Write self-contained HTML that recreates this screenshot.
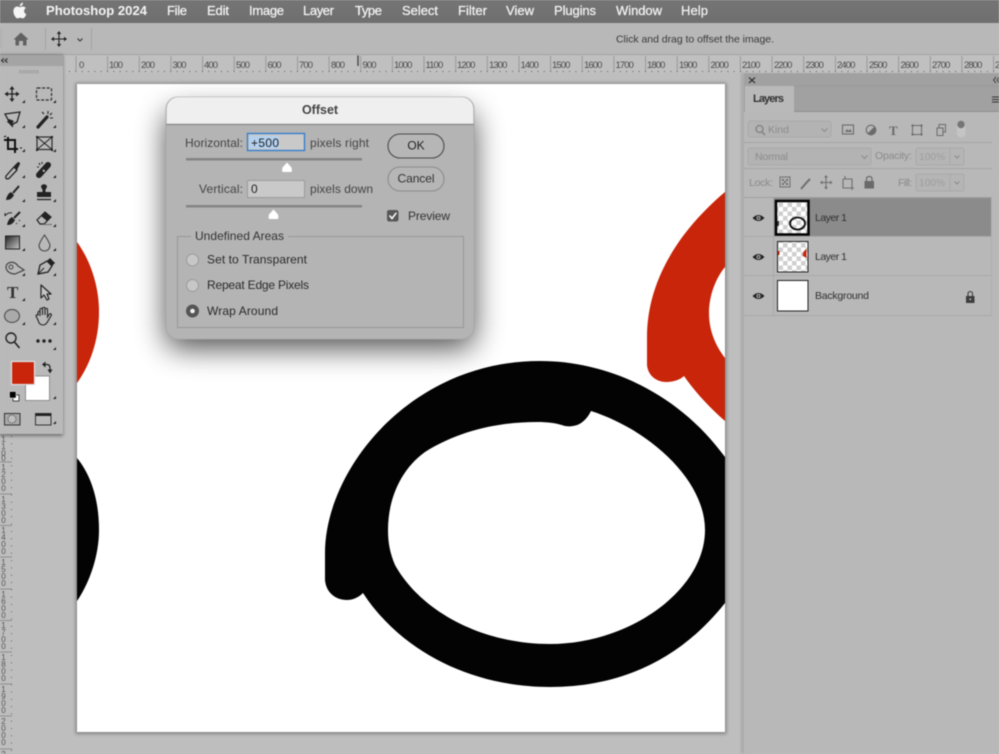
<!DOCTYPE html>
<html><head><meta charset="utf-8"><title>Photoshop Offset</title>
<style>
html,body{margin:0;padding:0;width:999px;height:754px;overflow:hidden;background:#bebebe}
svg{display:block;position:absolute;left:0;top:0;filter:blur(.4px)}
text{font-family:"Liberation Sans",sans-serif;fill:#2a2a2a}
.m{font-size:13px;fill:#f4f4f4;font-weight:700;stroke:none}
.r{font-size:9.5px;letter-spacing:-.9px;fill:#4a4a4a}
.v{font-size:8px;fill:#555;text-anchor:middle}
.d{font-size:12px;fill:#2b2b2b}
.l{font-size:10.5px;fill:#303030}
.g{font-size:10.5px;fill:#8a8a8a}
.g2{font-size:10px;fill:#949494}
.s{fill:none;stroke:#222;stroke-width:1.3}
.f{fill:#222;stroke:none}
</style></head><body>
<svg width="999" height="754" viewBox="0 0 999 754" xmlns="http://www.w3.org/2000/svg">
<defs>
<filter id="ds" x="-30%" y="-30%" width="160%" height="170%"><feGaussianBlur stdDeviation="15"/></filter>
<filter id="cs" x="-5%" y="-5%" width="110%" height="110%"><feGaussianBlur stdDeviation="1.5"/></filter>
<filter id="ts" x="-20%" y="-5%" width="140%" height="110%"><feGaussianBlur stdDeviation="1.5"/></filter>
<pattern id="ck" width="9" height="9" patternUnits="userSpaceOnUse"><rect width="9" height="9" fill="#fff"/><rect width="4.5" height="4.5" fill="#cfcfcf"/><rect x="4.5" y="4.5" width="4.5" height="4.5" fill="#cfcfcf"/></pattern>
<linearGradient id="gr" x1="0" x2="1" y1="0" y2="1"><stop offset="0" stop-color="#222"/><stop offset="1" stop-color="#c8c8c8"/></linearGradient>
<linearGradient id="mb" x1="0" x2="0" y1="0" y2="1"><stop offset="0" stop-color="#757575"/><stop offset="1" stop-color="#6f6f6f"/></linearGradient>
</defs>

<!-- base -->
<rect width="999" height="754" fill="#bebebe"/>
<rect width="999" height="23" fill="url(#mb)"/>
<rect y="23" width="999" height="32" fill="#b8b8b8"/>
<rect y="54" width="999" height="1" fill="#a3a3a3"/>

<!-- menu -->
<g transform="translate(10.5,1) scale(.8)"><path fill="#f5f5f5" d="M17.05 12.54c-.03-2.5 2.04-3.7 2.13-3.76-1.16-1.7-2.97-1.93-3.61-1.96-1.54-.16-3 .9-3.78.9-.78 0-1.98-.88-3.26-.86-1.68.03-3.22.98-4.09 2.48-1.74 3.02-.44 7.5 1.25 9.95.83 1.2 1.82 2.55 3.12 2.5 1.25-.05 1.72-.81 3.23-.81 1.51 0 1.94.81 3.26.78 1.35-.02 2.2-1.22 3.02-2.43.95-1.39 1.34-2.74 1.36-2.81-.03-.01-2.6-1-2.63-3.98zM14.56 5.2c.69-.84 1.16-2 1.03-3.16-1 .04-2.2.66-2.92 1.5-.64.74-1.2 1.93-1.05 3.06 1.11.09 2.25-.57 2.94-1.4z"/></g>
<text class="m" x="46" y="15" textLength="101" lengthAdjust="spacingAndGlyphs">Photoshop 2024</text>
<g>
<text class="m" x="167" y="15" textLength="20" style="font-weight:400;stroke:#f4f4f4;stroke-width:.25">File</text>
<text class="m" x="207" y="15" textLength="22" style="font-weight:400;stroke:#f4f4f4;stroke-width:.25">Edit</text>
<text class="m" x="249" y="15" textLength="35" style="font-weight:400;stroke:#f4f4f4;stroke-width:.25">Image</text>
<text class="m" x="303" y="15" textLength="31" style="font-weight:400;stroke:#f4f4f4;stroke-width:.25">Layer</text>
<text class="m" x="355" y="15" textLength="27" style="font-weight:400;stroke:#f4f4f4;stroke-width:.25">Type</text>
<text class="m" x="402" y="15" textLength="36" style="font-weight:400;stroke:#f4f4f4;stroke-width:.25">Select</text>
<text class="m" x="458" y="15" textLength="29" style="font-weight:400;stroke:#f4f4f4;stroke-width:.25">Filter</text>
<text class="m" x="506" y="15" textLength="28" style="font-weight:400;stroke:#f4f4f4;stroke-width:.25">View</text>
<text class="m" x="554" y="15" textLength="42" style="font-weight:400;stroke:#f4f4f4;stroke-width:.25">Plugins</text>
<text class="m" x="616" y="15" textLength="46" style="font-weight:400;stroke:#f4f4f4;stroke-width:.25">Window</text>
<text class="m" x="681" y="15" textLength="27" style="font-weight:400;stroke:#f4f4f4;stroke-width:.25">Help</text>
</g>

<!-- options bar -->
<path d="M0.5 29V49M1.5 29V49" stroke="#a0a0a0" stroke-width=".6" stroke-dasharray="1 1"/>
<path d="M21 32.5L28.5 39.5H26.5V45.5H23V41H19V45.5H15.5V39.5H13.5Z" fill="#616161"/>
<path d="M45.5 28V50M91.5 28V50" stroke="#a2a2a2" stroke-width="1"/>
<path d="M59 32V46M52 39H66" stroke="#222" stroke-width="1.1"/>
<path d="M59 31L56.8 34H61.2ZM59 47L56.8 44H61.2ZM51 39L54 36.8V41.2ZM67 39L64 36.8V41.2Z" fill="#222"/>
<path d="M77.5 38.5L80 41L82.5 38.5" fill="none" stroke="#333" stroke-width="1.1"/>
<text x="616" y="42.5" style="font-size:10.5px;fill:#3a3a3a" textLength="158">Click and drag to offset the image.</text>

<!-- horizontal ruler -->
<rect x="64" y="55" width="935" height="18" fill="#c0c0c0"/>
<path stroke="#9a9a9a" stroke-width="1" d="M76 56V71M107.6 56V71M139.3 56V71M170.9 56V71M202.6 56V71M234.2 56V71M265.8 56V71M297.5 56V71M329.1 56V71M360.8 56V71M392.4 56V71M424 56V71M455.7 56V71M487.3 56V71M519 56V71M550.6 56V71M582.2 56V71M613.9 56V71M645.5 56V71M677.2 56V71M708.8 56V71M740.4 56V71M772.1 56V71M803.7 56V71M835.4 56V71M867 56V71M898.6 56V71M930.3 56V71M961.9 56V71M993.6 56V71"/>
<path d="M69 71.5H999" stroke="#5e5e5e" stroke-width="1" stroke-dasharray="1 5.33"/>
<path d="M358 55.5V66" stroke="#444" stroke-width="1.4"/>
<g>
<text class="r" x="79" y="68">0</text><text class="r" x="109" y="68">100</text><text class="r" x="141" y="68">200</text><text class="r" x="172.5" y="68">300</text><text class="r" x="204" y="68">400</text><text class="r" x="236" y="68">500</text><text class="r" x="267.5" y="68">600</text><text class="r" x="299" y="68">700</text><text class="r" x="331" y="68">800</text><text class="r" x="362.5" y="68">900</text><text class="r" x="394" y="68">1000</text><text class="r" x="425.5" y="68">1100</text><text class="r" x="457" y="68">1200</text><text class="r" x="489" y="68">1300</text><text class="r" x="520.5" y="68">1400</text><text class="r" x="552" y="68">1500</text><text class="r" x="584" y="68">1600</text><text class="r" x="615.5" y="68">1700</text><text class="r" x="647" y="68">1800</text><text class="r" x="679" y="68">1900</text><text class="r" x="710.5" y="68">2000</text><text class="r" x="742" y="68">2100</text><text class="r" x="774" y="68">2200</text><text class="r" x="805.5" y="68">2300</text><text class="r" x="837" y="68">2400</text><text class="r" x="869" y="68">2500</text><text class="r" x="900.5" y="68">2600</text><text class="r" x="932" y="68">2700</text><text class="r" x="964" y="68">2800</text><text class="r" x="995" y="68">2900</text>
</g>

<!-- vertical ruler -->
<path stroke="#8f8f8f" stroke-width="1" d="M0 462H12M0 494H12M0 525.5H12M0 557H12M0 589H12M0 620.5H12M0 652H12M0 684H12M0 716H12M0 749H12"/>
<path d="M11.5 436V754" stroke="#666" stroke-width="1" stroke-dasharray="1 6.3"/>
<g>
<text class="v" x="3.5" y="442">1</text><text class="v" x="3.5" y="449">1</text><text class="v" x="3.5" y="456">0</text><text class="v" x="3.5" y="461">0</text>
<text class="v" x="3.5" y="470">1</text><text class="v" x="3.5" y="477">2</text><text class="v" x="3.5" y="484">0</text><text class="v" x="3.5" y="491">0</text>
<text class="v" x="3.5" y="502">1</text><text class="v" x="3.5" y="509">3</text><text class="v" x="3.5" y="516">0</text><text class="v" x="3.5" y="523">0</text>
<text class="v" x="3.5" y="533">1</text><text class="v" x="3.5" y="540">4</text><text class="v" x="3.5" y="547">0</text><text class="v" x="3.5" y="554">0</text>
<text class="v" x="3.5" y="565">1</text><text class="v" x="3.5" y="572">5</text><text class="v" x="3.5" y="579">0</text><text class="v" x="3.5" y="586">0</text>
<text class="v" x="3.5" y="597">1</text><text class="v" x="3.5" y="604">6</text><text class="v" x="3.5" y="611">0</text><text class="v" x="3.5" y="618">0</text>
<text class="v" x="3.5" y="628">1</text><text class="v" x="3.5" y="635">7</text><text class="v" x="3.5" y="642">0</text><text class="v" x="3.5" y="649">0</text>
<text class="v" x="3.5" y="660">1</text><text class="v" x="3.5" y="667">8</text><text class="v" x="3.5" y="674">0</text><text class="v" x="3.5" y="681">0</text>
<text class="v" x="3.5" y="692">1</text><text class="v" x="3.5" y="699">9</text><text class="v" x="3.5" y="706">0</text><text class="v" x="3.5" y="713">0</text>
<text class="v" x="3.5" y="724">2</text><text class="v" x="3.5" y="731">0</text><text class="v" x="3.5" y="738">0</text><text class="v" x="3.5" y="745">0</text>
<text class="v" x="3.5" y="757">2</text>
</g>

<!-- canvas -->
<rect x="75.500" y="83" width="651" height="651" fill="#000" opacity=".3" filter="url(#cs)"/>
<rect x="77" y="84" width="648" height="648" fill="#fff"/>
<path fill="#c8250a" fill-rule="evenodd" d="M725 192C680 230 647 280 647 337L647 365C648 376 657 382 666 382C673 382 680 380 684 376C695 392 710 408 725 421L725 358C715 345 709 330 709 313C709 295 716 278 725 267Z"/>
<path fill="#c8250a" d="M77 242C90 260 99 285 99 312C99 340 90 365 77 383Z"/>
<path fill="#030303" d="M77 458C91 475 99 500 99 530C99 555 90 582 77 601Z"/>
<path fill="#030303" fill-rule="evenodd" d="M325 553C325 470 410 361 540 361C610 361 680 395 725 457L725 603C680 660 620 687 550 687C470 687 400 650 363 593C358 598 352 600 347 600C335 600 326 592 325 580Z M388 530C388 500 400 470 425 452C460 430 500 422 537 422C548 422 556 423 565 426C578 428 586 421 591 411C650 430 705 480 705 530C705 590 630 644 550 644C480 644 420 610 395 565C390 553 388 543 388 530Z"/>

<!-- toolbar -->
<rect x="-3" y="55" width="66" height="381" fill="#000" opacity=".4" filter="url(#ts)"/>
<rect x="0" y="55" width="63" height="379" fill="#b9b9b9"/>
<rect x="0" y="55" width="63" height="11" fill="#a4a4a4"/>
<path d="M4 58.5L1.5 60.5L4 62.5M7.5 58.5L5 60.5L7.5 62.5" fill="none" stroke="#222" stroke-width="1"/>
<path d="M20 70V73.5M22 70V73.5M24 70V73.5M26 70V73.5M28 70V73.5M30 70V73.5M32 70V73.5M34 70V73.5M36 70V73.5M38 70V73.5" stroke="#999" stroke-width="1"/>
<!-- flyout triangles -->
<path class="f" d="M25 100V103H22ZM56 100V103H53ZM25 125V128H22ZM56 125V128H53ZM25 149V152H22ZM56 149V152H53ZM25 175V178H22ZM56 175V178H53ZM25 199V202H22ZM56 199V202H53ZM25 224V227H22ZM56 224V227H53ZM25 248V251H22ZM56 248V251H53ZM25 273V276H22ZM56 273V276H53ZM25 298V301H22ZM25 322V325H22ZM56 322V325H53ZM56 347V350H53ZM56 396V399H53ZM56 421V424H53Z"/>
<!-- move -->
<path d="M12 87V101M5 94H19" stroke="#222" stroke-width="1.3"/><path class="f" d="M12 86L9.5 89.5H14.5ZM12 102L9.5 98.5H14.5ZM4.5 94L8 91.5V96.5ZM19.5 94L16 91.5V96.5Z"/>
<!-- marquee -->
<rect x="36.5" y="88" width="15" height="12" rx="1" fill="none" stroke="#2a2a2a" stroke-width="1.2" stroke-dasharray="3 1.6"/>
<!-- lasso -->
<path class="s" d="M5 114L20 112L17 122L11 125L5 114ZM8 121C11 122 14 124 12 127"/><path class="f" d="M9 119L14 121L11 125L7 122Z"/>
<!-- wand -->
<path d="M38 127L47 117" stroke="#222" stroke-width="3.2" stroke-linecap="round"/><path d="M48 111V114M52 113L50 115M53 118H50M42 112L44 114" stroke="#222" stroke-width="1.1"/>
<!-- crop -->
<path d="M8 137V149H18M4 140H15V153" fill="none" stroke="#111" stroke-width="2"/><path d="M4 137L6 136M20 148H22" stroke="#111"/>
<!-- frame -->
<rect x="37" y="137" width="15" height="12.5" fill="none" stroke="#222" stroke-width="1.1"/><path d="M37 137L52 149.5M52 137L37 149.5" stroke="#222" stroke-width="1"/><path class="f" d="M36 136h2v2h-2zM51 136h2v2h-2zM36 149h2v2h-2zM51 149h2v2h-2z"/>
<!-- eyedropper -->
<path class="s" d="M6 176L14 167L17 170L9 178.500Q5 180 6 176Z"/><path d="M14 166L18 162Q20 162 20 164L17 170Z" fill="#222"/>
<!-- heal -->
<path d="M39 175L48 165" stroke="#222" stroke-width="6" stroke-linecap="round"/><path d="M43 170L44.500 171.500" stroke="#bbb" stroke-width="2"/><path d="M39 163l1 2M42 162v2M37 167h2" stroke="#222" stroke-width="1.100"/>
<!-- brush -->
<path d="M13 193L19 186" stroke="#222" stroke-width="2"/><path class="f" d="M6 200Q7 194 11 192L14 195Q12 200 6 200Z"/>
<!-- stamp -->
<path class="f" d="M41 186a3.500 3.500 0 0 1 6 0q0 2-1.500 3.500V192H51V197H37V192H42.500V189.500Q41 188 41 186Z"/><path d="M37 199.500H51" stroke="#222" stroke-width="1.300"/>
<!-- history brush -->
<path d="M14 218L20 212" stroke="#222" stroke-width="2"/><path class="f" d="M7 225Q8 219 12 217L15 220Q13 225 7 225Z"/><path class="s" d="M5 216Q8 212 12 213M5 216L5 213" style="stroke-width:1"/><path d="M16 224l1-1M19 221l1-1" stroke="#333"/>
<!-- eraser -->
<path d="M37 220L45 212L51 217L44 224H40Z" fill="#b9b9b9" stroke="#222" stroke-width="1.200"/><path class="f" d="M41 216L45 212L51 217L47 221Z"/><path d="M44 224.500H52" stroke="#777" stroke-width="1.200"/>
<!-- gradient -->
<rect x="5.500" y="236" width="14" height="13" fill="url(#gr)" stroke="#222" stroke-width="1"/>
<!-- smudge/drop -->
<path class="s" d="M44.500 235Q39 243 39 246Q40 251 44.500 251Q49 251 50 246Q50 243 44.500 235Z" style="stroke-width:1.100;stroke:#444"/>
<!-- dodge -->
<path d="M6 267C6 262 14 260 18 266L24 270L15 274C10 274 6 271 6 267Z" fill="none" stroke="#444" stroke-width="1.200"/><circle cx="11" cy="267" r="2" fill="none" stroke="#444"/>
<!-- pen -->
<path class="s" d="M38 274L40 265L47 261L52 266L48 272Z"/><path d="M38 274L44 268" stroke="#222"/><path d="M47 261L50 258L55 263L52 266" fill="#222"/>
<!-- T -->
<text x="7" y="298" style="font-family:'Liberation Serif',serif;font-size:17px;font-weight:700;fill:#333">T</text>
<!-- arrow -->
<path d="M41 285L41 298L44 295L47 300L49 299L47 294L51 294Z" fill="#c4c4c4" stroke="#222" stroke-width="1.200" stroke-linejoin="round"/>
<!-- ellipse -->
<ellipse cx="12" cy="316" rx="7.500" ry="6.500" fill="#aaa" stroke="#555" stroke-width="1.200"/>
<!-- hand -->
<path d="M38 315V312Q39 310.500 40 312V316V309Q41 307.500 42.500 309V315V308Q44 306.500 45 308V315V309Q46.500 307.500 47.500 309V317L49.500 314Q51 313 51.500 315L48 321Q46 325 43 325Q39 325 38 320L36 316Q36.500 314 38 315Z" fill="#b9b9b9" stroke="#222" stroke-width="1.100"/>
<!-- zoom -->
<circle cx="11" cy="338" r="5" fill="none" stroke="#222" stroke-width="1.400"/><path d="M14.500 342L19.500 348" stroke="#222" stroke-width="1.600"/>
<!-- dots -->
<circle cx="38" cy="341" r="1.700" fill="#222"/><circle cx="44" cy="341" r="1.700" fill="#222"/><circle cx="50" cy="341" r="1.700" fill="#222"/>
<!-- colours -->
<rect x="25.500" y="376" width="24" height="24.500" fill="#fff" stroke="#8d8d8d" stroke-width="1"/>
<rect x="11.500" y="361.500" width="23" height="23" fill="#c8250a" stroke="#e0e0e0" stroke-width="1.200"/>
<path d="M43 364.500H47Q50 364.500 50 368V371" fill="none" stroke="#222" stroke-width="1.300"/><path class="f" d="M45.500 361.500L42 364.500L45.500 367.500ZM47.500 369.500H52.500L50 373.500Z"/>
<rect x="13" y="395" width="6" height="6" fill="#fff" stroke="#222" stroke-width=".8"/><rect x="9.500" y="391.500" width="6.500" height="6.500" fill="#000" stroke="#ddd" stroke-width=".6"/>
<!-- quick mask / screen mode -->
<rect x="4.500" y="413.500" width="15.500" height="11.500" fill="#aaa" stroke="#333" stroke-width="1"/><circle cx="12" cy="419" r="4" fill="#c0c0c0" stroke="#555" stroke-dasharray="1.500 1"/>
<rect x="35.500" y="413.500" width="15.500" height="11.500" fill="#b9b9b9" stroke="#333" stroke-width="1"/><rect x="35.500" y="413.500" width="15.500" height="2.500" fill="#222"/>

<!-- layers panel -->
<rect x="741" y="73" width="4" height="681" fill="#000" opacity=".12" filter="url(#ts)"/>
<rect x="744" y="73" width="255" height="681" fill="#b8b8b8"/>
<rect x="744" y="73" width="255" height="39" fill="#a1a1a1"/>
<path d="M749 77.500L755 83M755 77.500L749 83" stroke="#222" stroke-width="1.100"/>
<path d="M996 77L993.500 80L996 83M999.500 77L997 80L999.500 83" fill="none" stroke="#444" stroke-width="1"/>
<rect x="745" y="86" width="49" height="26" fill="#b9b9b9"/>
<path d="M744 86H745M794 86H999" stroke="#989898"/><path d="M794 111.500H999" stroke="#8f8f8f"/>
<text x="753" y="102" style="font-size:11px;font-weight:700;fill:#333" textLength="31">Layers</text>
<path d="M992 97H999M992 99.500H999M992 102H999" stroke="#333" stroke-width="1"/>
<!-- filter row -->
<rect x="748" y="121" width="83" height="16" rx="2.500" fill="#b3b3b3" stroke="#a9a9a9"/>
<circle cx="759.500" cy="129" r="3.500" fill="none" stroke="#7f7f7f" stroke-width="1.300"/><path d="M762 132L765 135" stroke="#7f7f7f" stroke-width="1.500"/>
<text class="g" x="768" y="133" style="fill:#8b8b8b">Kind</text>
<path d="M821.500 128.500L824.500 131.500L827.500 128.500" fill="none" stroke="#8a8a8a"/>
<rect x="842.500" y="125" width="11" height="9" fill="none" stroke="#6b6b6b" stroke-width="1.100"/><path d="M845 132L847 129L848.500 131L850 129L852 132Z" fill="#6b6b6b"/>
<circle cx="871" cy="130" r="4.800" fill="#b8b8b8" stroke="#6b6b6b" stroke-width="1.100"/><path d="M874.400 126.600A4.800 4.800 0 0 1 867.600 133.400Z" fill="#6b6b6b"/>
<text x="889" y="135" style="font-family:'Liberation Serif',serif;font-size:13px;font-weight:700;fill:#6b6b6b">T</text>
<rect x="912.500" y="125.500" width="9" height="9" fill="none" stroke="#6b6b6b"/><path d="M911.500 124.500h2v2h-2zM920.500 124.500h2v2h-2zM911.500 133.500h2v2h-2zM920.500 133.500h2v2h-2z" fill="#6b6b6b"/>
<rect x="937" y="128" width="6" height="7.500" fill="#b8b8b8" stroke="#6b6b6b"/><path d="M939 128V124.500H945.500V132H943" fill="none" stroke="#6b6b6b"/>
<rect x="957" y="122" width="8.500" height="15.500" rx="4.200" fill="#c4c4c4"/><circle cx="961" cy="124.500" r="3.700" fill="#767676"/>
<path d="M744 142.500H992" stroke="#a5a5a5"/>
<!-- blend row -->
<rect x="748" y="148" width="123" height="17" rx="2" fill="#b3b3b3" stroke="#a9a9a9"/>
<text class="g" x="755" y="160" textLength="33" style="fill:#8b8b8b">Normal</text>
<path d="M861.500 155.500L864.500 158.500L867.500 155.500" fill="none" stroke="#8a8a8a"/>
<text class="g" x="875" y="159" textLength="37">Opacity:</text>
<rect x="916" y="148" width="48" height="17" rx="2" fill="#b5b5b5" stroke="#a9a9a9"/><path d="M950 148V165" stroke="#a9a9a9"/>
<text class="g2" x="919" y="160" textLength="26" style="fill:#9d9d9d">100%</text>
<path d="M954.500 155.500L957 158L959.500 155.500" fill="none" stroke="#8a8a8a"/>
<path d="M744 168.500H992" stroke="#a5a5a5"/>
<!-- lock row -->
<text class="g" x="749" y="186" textLength="24">Lock:</text>
<rect x="780" y="177" width="10" height="10" fill="#b5b5b5" stroke="#6f6f6f"/><path d="M782 179h2v2h-2zM786 179h2v2h-2zM784 181h2v2h-2zM782 183h2v2h-2zM786 183h2v2h-2z" fill="#6f6f6f"/>
<path d="M801 189L807 182L810 179" stroke="#6f6f6f" stroke-width="2"/>
<path d="M826 176V188.500M820.500 182.500H832" stroke="#6f6f6f" stroke-width="1.100"/><path d="M826 175L824 177.500H828ZM826 189.500L824 187H828ZM820 182.500L822.500 180.500V184.500ZM832.500 182.500L830 180.500V184.500Z" fill="#6f6f6f"/>
<path d="M843 179H852V188M843 179V188H854M845 176V179M852 188V190" fill="none" stroke="#6f6f6f" stroke-width="1.100"/>
<rect x="864.500" y="181" width="9.500" height="7.500" fill="#6a6a6a"/><path d="M866.500 181V179Q866.500 176.500 869.200 176.500Q872 176.500 872 179V181" fill="none" stroke="#6a6a6a" stroke-width="1.200"/>
<text class="g" x="898" y="186" textLength="14">Fill:</text>
<rect x="916" y="174" width="48" height="17" rx="2" fill="#b5b5b5" stroke="#a9a9a9"/><path d="M950 174V191" stroke="#a9a9a9"/>
<text class="g2" x="919" y="186" textLength="26" style="fill:#9d9d9d">100%</text>
<path d="M954.500 181.500L957 184L959.500 181.500" fill="none" stroke="#8a8a8a"/>
<path d="M744 197.500H992" stroke="#a0a0a0"/>
<!-- layer rows -->
<rect x="774" y="198" width="217" height="38" fill="#8b8b8b"/>
<path d="M744 236.500H991M744 275.500H991M744 315.500H991M773.500 198V316" stroke="#a8a8a8" stroke-width="1"/>
<path d="M991.500 198V316" stroke="#b0b0b0"/>
<g>
<path d="M752.500 218Q758.500 212 764.500 218Q758.500 224 752.500 218Z" fill="#222"/><circle cx="758.500" cy="218" r="2" fill="#bbb"/><circle cx="758.500" cy="218" r="1" fill="#222"/>
<path d="M752.500 257Q758.500 251 764.500 257Q758.500 263 752.500 257Z" fill="#222"/><circle cx="758.500" cy="257" r="2" fill="#bbb"/><circle cx="758.500" cy="257" r="1" fill="#222"/>
<path d="M752.500 296Q758.500 290 764.500 296Q758.500 302 752.500 296Z" fill="#222"/><circle cx="758.500" cy="296" r="2" fill="#bbb"/><circle cx="758.500" cy="296" r="1" fill="#222"/>
</g>
<rect x="776" y="201" width="32.500" height="33.500" fill="url(#ck)" stroke="#000" stroke-width="2.500"/>
<ellipse cx="797.500" cy="223.500" rx="7.500" ry="6" fill="none" stroke="#0a0a0a" stroke-width="1.800"/><path d="M778 221V226" stroke="#111" stroke-width="1.500"/>
<rect x="777.500" y="241.500" width="30.500" height="30.500" fill="url(#ck)" stroke="#222" stroke-width="1"/>
<path d="M806.500 249Q802 252 803 256L806.500 258Z" fill="#c8250a"/><path d="M778 251H779.500V255H778Z" fill="#c8250a"/>
<rect x="777.500" y="280.500" width="30.500" height="30.500" fill="#fff" stroke="#222" stroke-width="1"/>
<text class="l" x="815" y="221" textLength="32">Layer 1</text>
<text class="l" x="815" y="260" textLength="32">Layer 1</text>
<text class="l" x="815" y="299" textLength="54">Background</text>
<rect x="966" y="296" width="8.500" height="7" fill="#3d3d3d"/><path d="M968 296V294Q968 291.500 970.200 291.500Q972.500 291.500 972.500 294V296" fill="none" stroke="#3d3d3d" stroke-width="1.100"/><rect x="969.500" y="298.500" width="1.500" height="1.500" fill="#ccc"/>

<!-- dialog -->
<rect x="166" y="112" width="308" height="236" rx="12" fill="#000" opacity=".7" filter="url(#ds)"/>
<rect x="166" y="97" width="308" height="242" rx="12" fill="#b4b4b4" stroke="#a8a8a8" stroke-width="1"/>
<path d="M166.500 124V109A12 12 0 0 1 178.500 97H461.500A12 12 0 0 1 473.500 109V124Z" fill="#efefef" stroke="#c4c4c4" stroke-width=".6"/>
<path d="M166 124.500H474" stroke="#8a8a8a" stroke-width="1.200"/>
<text x="320" y="114" text-anchor="middle" style="font-size:12.500px;font-weight:700;fill:#444">Offset</text>

<text class="d" x="185" y="147" textLength="58" style="fill:#444">Horizontal:</text>
<rect x="247.500" y="133.500" width="57" height="17" fill="#c9c9c9" stroke="#2f7ad1" stroke-width="1.300"/>
<rect x="250" y="136" width="29" height="12.500" fill="#b3d1f0"/>
<text class="d" x="251" y="147" textLength="28" style="fill:#222">+500</text>
<text class="d" x="310" y="147" textLength="59" style="fill:#444">pixels right</text>
<rect x="186" y="158" width="176" height="2.500" fill="#848484"/>
<path d="M287 162.500L291.500 167.500Q292.500 172 291 172H283Q281.500 172 282.500 167.500Z" fill="#fff"/>

<text class="d" x="199" y="193" textLength="44" style="fill:#444">Vertical:</text>
<rect x="247.500" y="180.500" width="57" height="17" fill="#c9c9c9" stroke="#9a9a9a" stroke-width="1"/>
<text class="d" x="251" y="193" style="fill:#222">0</text>
<text class="d" x="310" y="193" textLength="63" style="fill:#444">pixels down</text>
<rect x="186" y="205" width="176" height="2.500" fill="#848484"/>
<path d="M273.500 209.500L278 214.500Q279 219 277.500 219H269.500Q268 219 269 214.500Z" fill="#fff"/>

<rect x="388" y="134" width="56" height="24" rx="12" fill="#b6b6b6" stroke="#4a4a4a" stroke-width="1.100"/>
<text class="d" x="416" y="149.500" text-anchor="middle" style="fill:#222">OK</text>
<rect x="388" y="167" width="56" height="24" rx="12" fill="#b6b6b6" stroke="#8c8c8c" stroke-width="1.100"/>
<text class="d" x="416" y="182.500" text-anchor="middle" textLength="37" style="fill:#333">Cancel</text>

<rect x="387" y="210" width="11.500" height="11.500" rx="2.200" fill="#565656"/>
<path d="M389.500 215.500L392 218.500L396.300 212.800" fill="none" stroke="#fff" stroke-width="1.500"/>
<text class="d" x="408" y="220" textLength="42" style="fill:#333">Preview</text>

<rect x="177.500" y="236.500" width="286" height="91" fill="none" stroke="#979797" stroke-width="1"/>
<rect x="191" y="230" width="97" height="12" fill="#b4b4b4"/>
<text class="d" x="195" y="240" textLength="89" style="fill:#333">Undefined Areas</text>

<circle cx="192.500" cy="260" r="6" fill="#c7c7c7" stroke="#9a9a9a"/>
<text class="d" x="207" y="263.500" textLength="100" style="fill:#2a2a2a">Set to Transparent</text>
<circle cx="192.500" cy="285.500" r="6" fill="#c7c7c7" stroke="#9a9a9a"/>
<text class="d" x="207" y="289" textLength="102" style="fill:#2a2a2a">Repeat Edge Pixels</text>
<circle cx="192.500" cy="311" r="6.500" fill="#555"/><circle cx="192.500" cy="311" r="2.300" fill="#f2f2f2"/>
<text class="d" x="207" y="315" textLength="71" style="fill:#2a2a2a">Wrap Around</text>
</svg>
</body></html>
